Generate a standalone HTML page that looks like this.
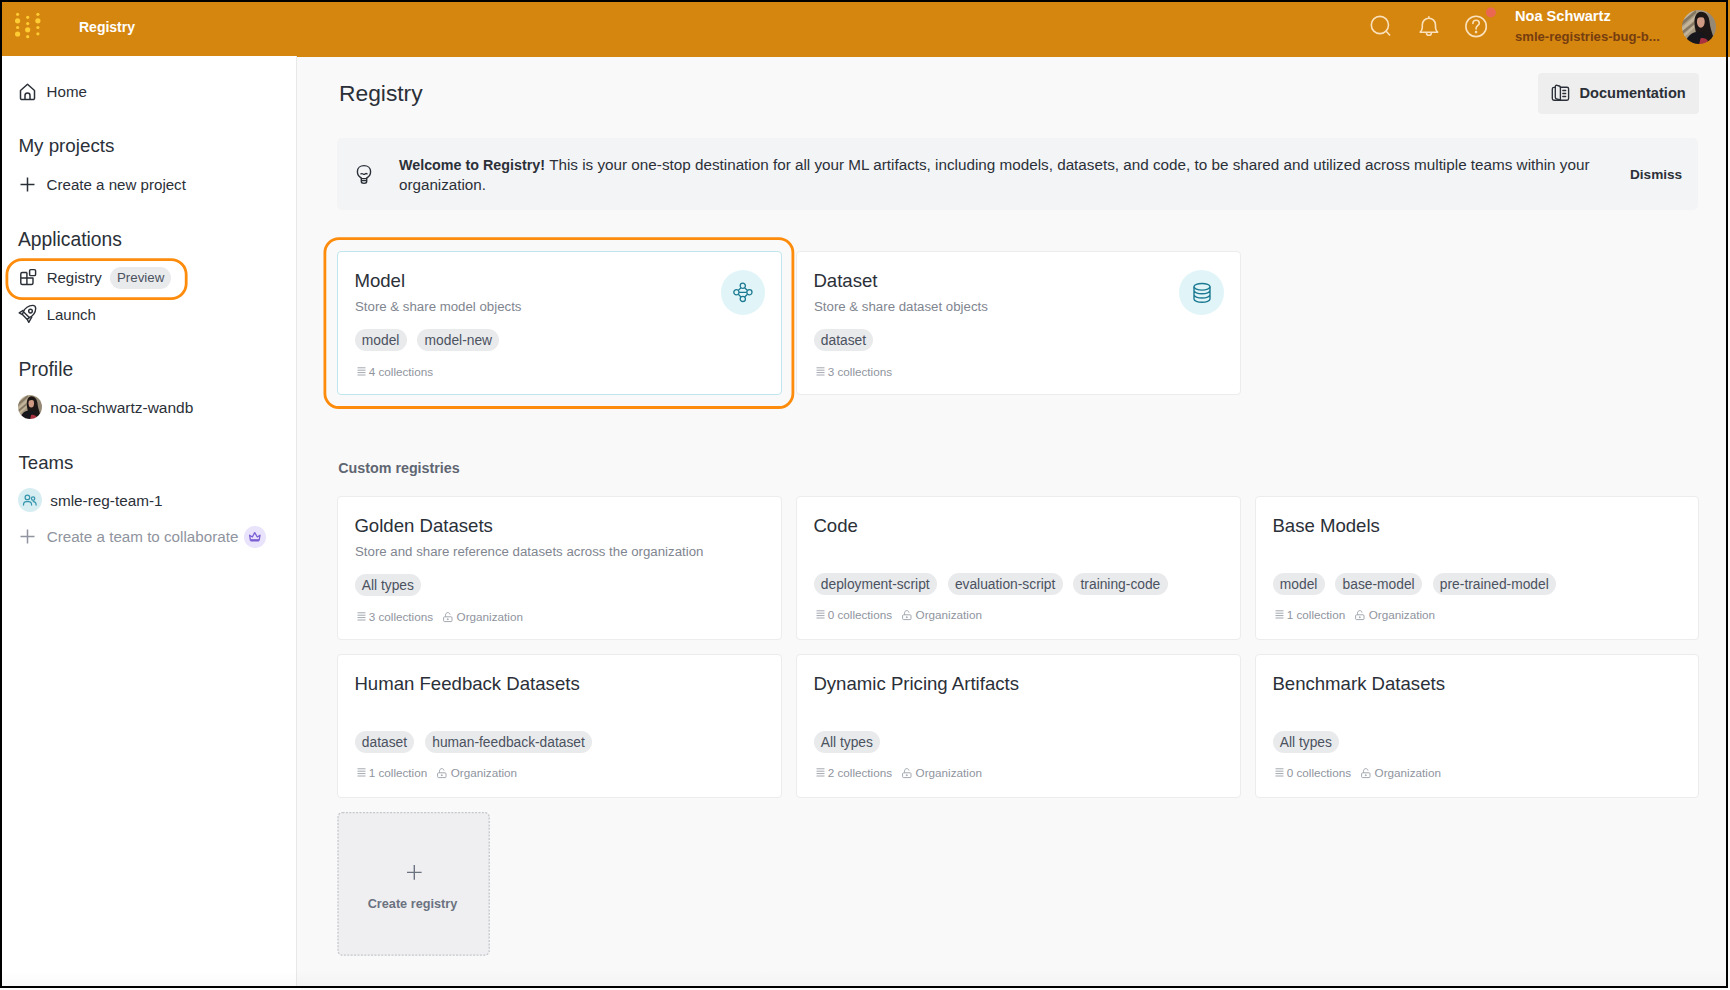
<!DOCTYPE html>
<html><head><meta charset="utf-8">
<style>
*{box-sizing:border-box;margin:0;padding:0}
html,body{width:1730px;height:990px;overflow:hidden;background:#fff}
body{position:relative;font-family:"Liberation Sans",sans-serif;color:#2b3038}
.frame{position:absolute;left:0;top:0;width:1728px;height:988px;background:#000}
.page{position:absolute;left:2px;top:2px;width:1724px;height:984px;background:#f9f9f9;overflow:hidden}
.t{position:absolute;white-space:nowrap;line-height:1}
svg{position:absolute;overflow:visible}
.hdr{position:absolute;left:0;top:0;width:1724px;height:54.6px;background:#d4860f}
.side{position:absolute;left:0;top:54px;width:295px;height:930px;background:#fff;border-right:1px solid #e8e8e8}
.card{position:absolute;background:#fff;border:1px solid #ececec;border-radius:4px}
.pill{position:absolute;height:22px;border-radius:11px;background:#e9eaec}
.ptxt{color:#4b5260;font-size:13.5px}
.ttl{font-size:18.6px;color:#2b3038}
.desc{font-size:13.25px;color:#80858f}
.pills{position:absolute;display:flex;gap:10.6px}
.pills span{display:block;height:22px;line-height:20px;padding:2px 7.3px 0;border-radius:11px;background:#e9eaec;color:#4b5260;font-size:13.8px;white-space:nowrap}
.metarow{position:absolute;display:flex;align-items:flex-start;height:10px;white-space:nowrap}
.metarow span{font-size:11.7px;line-height:1;color:#8f949e;margin-top:-1.4px}
.metarow .il{position:static;margin-top:-0.3px}
.metarow .m1{margin-left:3.2px}
.metarow .ik{position:static;margin-left:10px;margin-top:-0.5px}
.metarow .m2{margin-left:3.6px}
</style></head>
<body>
<div style="position:absolute;left:1728px;top:0;width:2px;height:56.6px;background:#d4860f"></div>
<div style="position:absolute;left:1728px;top:56.6px;width:2px;height:934px;background:#f9f9f9"></div>
<div style="position:absolute;left:0;top:988px;width:1730px;height:2px;background:#fdfdfd"></div>
<div class="frame"></div>
<div class="page">
<!-- coordinates inside .page are target coords minus 2 -->
<div style="position:absolute;left:-2px;top:-2px;width:1730px;height:990px">

<!-- HEADER -->
<div class="hdr" style="left:2px;top:2px"></div>
<svg style="left:0;top:0" width="60" height="56">
 <g fill="#ffcc33">
  <circle cx="17.6" cy="14.3" r="1.6"/><circle cx="17.6" cy="20.8" r="2.6"/><circle cx="17.6" cy="27.5" r="1.6"/><circle cx="17.6" cy="34" r="2.6"/>
  <circle cx="27.7" cy="17.3" r="1.6"/><circle cx="27.7" cy="23.6" r="1.6"/><circle cx="27.7" cy="29.8" r="2.6"/><circle cx="27.7" cy="36.7" r="1.6"/>
  <circle cx="37.9" cy="14.3" r="1.6"/><circle cx="37.9" cy="20.8" r="2.6"/><circle cx="37.9" cy="27.5" r="1.6"/><circle cx="37.9" cy="33.8" r="1.6"/>
 </g>
</svg>
<div class="t" style="left:79px;top:calc(31.9px - .8465*14px);font-size:14px;font-weight:700;color:#fff">Registry</div>

<!-- header icons -->
<svg style="left:1360px;top:0" width="140" height="56" fill="none" stroke="#fbe1bb" stroke-width="1.6" stroke-linecap="round">
 <circle cx="19.9" cy="25" r="8.6"/><path d="M26.2 31.3 L29.6 35"/>
 <path d="M60.2 32.2 C61.5 31 62.3 29.5 62.3 27.5 V25 C62.3 21 65.2 18.3 68.9 18.3 C72.6 18.3 75.5 21 75.5 25 V27.5 C75.5 29.5 76.3 31 77.6 32.2 Z M68.9 16.8 V18.3 M66.5 33.3 C66.8 35.8 71 35.8 71.3 33.3" stroke-linejoin="round"/>
 <circle cx="116.1" cy="26.4" r="10.2"/>
 <path d="M112.9 23.4 C112.9 21.4 114.3 20.2 116.1 20.2 C117.9 20.2 119.3 21.4 119.3 23.2 C119.3 25.3 116.1 25.6 116.1 28.3 V29"/>
 <circle cx="116.1" cy="32.1" r=".5" fill="#fbe1bb"/>
</svg>
<svg style="left:1480px;top:0" width="20" height="30"><circle cx="10.9" cy="12.5" r="5" fill="#ea6852"/></svg>
<div class="t" style="left:1515px;top:calc(21.5px - .8465*14.6px);font-size:14.6px;font-weight:700;color:#fff">Noa Schwartz</div>
<div class="t" style="left:1515px;top:calc(40.8px - .8465*13.1px);font-size:13.1px;font-weight:700;color:#763d10">smle-registries-bug-b...</div>
<svg style="left:1682px;top:9.8px" width="34" height="34" viewBox="0 0 34 34">
 <defs><clipPath id="av1"><circle cx="17" cy="17" r="17"/></clipPath><filter id="av1b" x="-10%" y="-10%" width="120%" height="120%"><feGaussianBlur stdDeviation=".55"/></filter></defs>
 <g clip-path="url(#av1)"><g filter="url(#av1b)">
  <rect x="-2" y="-2" width="38" height="38" fill="#a89a82"/>
  <path d="M-2 9 L11 -2 H15 L-2 14 Z M-2 19 L15 4 V8 L-2 23 Z M-2 28 L12 15 V18 L-2 31 Z" fill="#cbbda3" opacity=".75"/>
  <path d="M-2 13 L14 0 V3 L-2 17 Z M-2 23 L12 12 V14.5 L-2 26 Z" fill="#6f6352" opacity=".65"/>
  <path d="M25 2 L36 8 V30 L29 24 Z" fill="#8d8270" opacity=".7"/>
  <path d="M12.5 14 C12 7 14.5 1.8 19 1.8 C24 1.8 27 6 27.5 11.5 C28 17 29.5 21 31 26 L28 34 L15 32 C15 25 13 20 12.5 14 Z" fill="#1d1512"/>
  <ellipse cx="18.8" cy="11.8" rx="3.9" ry="6" fill="#cf9a84"/>
  <path d="M14.8 8.5 C15.5 5.2 17.5 4.3 19.8 4.6 C21.8 4.9 22.8 6.3 23 8.3 C21 6.8 18.2 6.6 14.8 8.5 Z" fill="#1d1512"/>
  <path d="M3 35 C4 27 9 22.5 15 22 C19 21.7 22 23.5 24 26.5 L25 35 Z" fill="#15141b"/>
  <path d="M17 35 L18.5 28.5 C21 27.5 23.5 28.5 25.5 30 L26 35 Z" fill="#a8323f"/>
 </g></g>
</svg>

<!-- SIDEBAR -->
<div class="side" style="left:2px;top:56px"></div>
<svg style="left:19px;top:83px" width="18" height="18" fill="none" stroke="#2b3038" stroke-width="1.5" stroke-linejoin="round">
 <path d="M1.5 7.5 L8.5 1.3 L15.5 7.5 V15.2 A1.4 1.4 0 0 1 14.1 16.6 H2.9 A1.4 1.4 0 0 1 1.5 15.2 Z"/>
 <path d="M6 16.6 V12.5 A2.5 2.5 0 0 1 11 12.5 V16.6"/>
</svg>
<div class="t" style="left:46.6px;top:calc(96.9px - .8465*15.1px);font-size:15.1px">Home</div>

<div class="t" style="left:18.4px;top:calc(153.4px - .8465*18.8px);font-size:18.8px">My projects</div>
<svg style="left:20px;top:177px" width="16" height="16" fill="none" stroke="#2b3038" stroke-width="1.5"><path d="M7.5 0.5 V14.5 M0.5 7.5 H14.5"/></svg>
<div class="t" style="left:46.6px;top:calc(189.8px - .8465*15.1px);font-size:15.1px">Create a new project</div>

<div class="t" style="left:17.9px;top:calc(246.4px - .8465*19.3px);font-size:19.3px">Applications</div>
<svg style="left:0;top:0" width="40" height="300" fill="none" stroke="#2b3038" stroke-width="1.45" stroke-linejoin="round">
 <path d="M26.9 272.5 H22.3 Q20.8 272.5 20.8 274 V283 Q20.8 284.5 22.3 284.5 H31.5 Q33 284.5 33 283 V278 H20.8 M26.9 272.5 V284.5"/>
 <rect x="29.6" y="269.6" width="6" height="6" rx="1.2"/>
</svg>
<div class="t" style="left:46.7px;top:calc(282.8px - .8465*15px);font-size:15px">Registry</div>
<div style="position:absolute;left:109.7px;top:267px;width:61.5px;height:22px;border-radius:11px;background:#e9eaec"></div>
<div class="t" style="left:117px;top:calc(282px - .8465*13.3px);font-size:13.3px;color:#4b5260">Preview</div>
<svg style="left:0;top:0" width="200" height="310" fill="none"><rect x="6.9" y="259.6" width="179.3" height="39" rx="15" stroke="#fd8c0d" stroke-width="2.8"/></svg>
<svg style="left:0;top:0" width="40" height="330" fill="none" stroke="#2b3038" stroke-width="1.4" stroke-linejoin="round">
 <path d="M23.4 311.7 C24.8 308.3 28.6 305.4 32.6 305.4 C34.8 305.4 35.7 306.4 35.7 308.5 C35.7 312.6 32.6 316.4 29.3 317.6 Z"/>
 <circle cx="30.5" cy="311.1" r="1.85"/>
 <path d="M23.6 310.1 L19.2 312.9 L22.4 314.6 M32 316.7 L28.8 322.3 L27.2 319.4 M22.4 314.6 L27.2 319.4 M23.4 311.7 L22.4 314.6 M29.3 317.6 L27.2 319.4"/>
</svg>
<div class="t" style="left:46.7px;top:calc(319.4px - .8465*15px);font-size:15px">Launch</div>

<div class="t" style="left:18.5px;top:calc(375.9px - .8465*19.3px);font-size:19.3px">Profile</div>
<svg style="left:17.7px;top:395.2px" width="24" height="24" viewBox="0 0 34 34">
 <defs><clipPath id="av2"><circle cx="17" cy="17" r="17"/></clipPath><filter id="av2b" x="-10%" y="-10%" width="120%" height="120%"><feGaussianBlur stdDeviation=".55"/></filter></defs>
 <g clip-path="url(#av2)"><g filter="url(#av2b)">
  <rect x="-2" y="-2" width="38" height="38" fill="#a89a82"/>
  <path d="M-2 9 L11 -2 H15 L-2 14 Z M-2 19 L15 4 V8 L-2 23 Z M-2 28 L12 15 V18 L-2 31 Z" fill="#cbbda3" opacity=".75"/>
  <path d="M-2 13 L14 0 V3 L-2 17 Z M-2 23 L12 12 V14.5 L-2 26 Z" fill="#6f6352" opacity=".65"/>
  <path d="M25 2 L36 8 V30 L29 24 Z" fill="#8d8270" opacity=".7"/>
  <path d="M12.5 14 C12 7 14.5 1.8 19 1.8 C24 1.8 27 6 27.5 11.5 C28 17 29.5 21 31 26 L28 34 L15 32 C15 25 13 20 12.5 14 Z" fill="#1d1512"/>
  <ellipse cx="18.8" cy="11.8" rx="3.9" ry="6" fill="#cf9a84"/>
  <path d="M14.8 8.5 C15.5 5.2 17.5 4.3 19.8 4.6 C21.8 4.9 22.8 6.3 23 8.3 C21 6.8 18.2 6.6 14.8 8.5 Z" fill="#1d1512"/>
  <path d="M3 35 C4 27 9 22.5 15 22 C19 21.7 22 23.5 24 26.5 L25 35 Z" fill="#15141b"/>
  <path d="M17 35 L18.5 28.5 C21 27.5 23.5 28.5 25.5 30 L26 35 Z" fill="#a8323f"/>
 </g></g>
</svg>
<div class="t" style="left:50.3px;top:calc(413px - .8465*15.5px);font-size:15.5px">noa-schwartz-wandb</div>

<div class="t" style="left:18.5px;top:calc(469.8px - .8465*18.6px);font-size:18.6px">Teams</div>
<div style="position:absolute;left:17.5px;top:488px;width:24px;height:24px;border-radius:50%;background:#d6edf2"></div>
<svg style="left:0;top:0" width="45" height="520" fill="none" stroke="#3596ae" stroke-width="1.25" stroke-linecap="round">
 <circle cx="27.4" cy="497.4" r="2.3"/><path d="M23.5 505 C23.5 502.8 24.6 501.6 26.3 501.6 H28.7 C30.5 501.6 31.6 502.8 31.6 505"/>
 <circle cx="33.1" cy="498.6" r="1.7"/><path d="M33.2 501.5 C35 501.5 36.1 502.8 36.1 505"/>
</svg>
<div class="t" style="left:50.3px;top:calc(506px - .8465*15.3px);font-size:15.3px">smle-reg-team-1</div>
<svg style="left:20px;top:529px" width="16" height="16" fill="none" stroke="#8f949e" stroke-width="1.5"><path d="M7.5 0.5 V14.5 M0.5 7.5 H14.5"/></svg>
<div class="t" style="left:46.7px;top:calc(542px - .8465*15.2px);font-size:15.2px;color:#8f949e">Create a team to collaborate</div>
<div style="position:absolute;left:244.2px;top:526.2px;width:21.6px;height:21.6px;border-radius:50%;background:#e9e3fc"></div>
<svg style="left:0;top:0" width="270" height="550" fill="none" stroke="#7a5fd3" stroke-width="1.3" stroke-linejoin="round">
 <path d="M249.6 535.2 L252.3 537 L254.7 532.6 L257.3 537 L260 535.2 L259.2 540.2 H250.4 Z"/>
 <path d="M250.6 540.4 H258.9" stroke-width="2.2"/>
</svg>

<!-- MAIN -->
<div class="t" style="left:339px;top:calc(101.3px - .8465*22.8px);font-size:22.8px">Registry</div>

<div style="position:absolute;left:1538px;top:73px;width:160.5px;height:40.5px;border-radius:4px;background:#eeeeee"></div>
<svg style="left:0;top:0" width="1580" height="110" fill="none" stroke="#2b3038" stroke-width="1.35" stroke-linejoin="round" stroke-linecap="round">
 <path d="M1560.4 87.2 H1567 Q1568.6 87.2 1568.6 88.8 V98.6 Q1568.6 100.2 1567 100.2 H1554 Q1552.3 100.2 1552.3 98.5 V89 Q1552.3 87.4 1554 87.4 H1555.3"/>
 <path d="M1555.3 97.3 V86.6 Q1555.3 84.9 1557 85.3 L1559.3 86 Q1560.4 86.4 1560.4 87.6 V100 M1555.3 97.3 Q1555.3 98.5 1556.5 98.8 L1560.4 100"/>
 <path d="M1562.9 90.5 H1565.6 M1562.9 93.5 H1565.6 M1562.9 96.5 H1565.6" stroke-width="1.5"/>
</svg>
<div class="t" style="left:1579.5px;top:calc(98.7px - .8465*14.6px);font-size:14.6px;font-weight:700">Documentation</div>

<div style="position:absolute;left:337.4px;top:137.6px;width:1360.6px;height:72.9px;border-radius:5px;background:#f3f4f6"></div>
<svg style="left:0;top:0" width="380" height="190" fill="none" stroke="#2b3038" stroke-width="1.4" stroke-linejoin="round" stroke-linecap="round">
 <path d="M361.3 178 C358.8 176.8 357.4 174.4 357.4 171.6 C357.4 167.9 360.3 165.6 364 165.6 C367.7 165.6 370.6 167.9 370.6 171.6 C370.6 174.4 369.2 176.8 366.7 178 V181.6 C366.7 182.8 365.5 183.4 364 183.4 C362.5 183.4 361.3 182.8 361.3 181.6 Z"/>
 <path d="M361.3 178.6 H366.7 M361.8 180.6 H366.2" stroke-width="1.1"/>
 <path d="M360.9 173.9 C361.8 173.3 362.6 173.6 363.2 174.1 C363.8 174.5 364.5 174.5 365 174 C365.6 173.5 366.4 173.4 367.1 173.9" stroke-width="1.3"/>
</svg>
<div class="t" style="left:399px;top:calc(169.5px - .8465*15.2px);font-size:15.2px;color:#2b3038"><b style="font-size:14.3px">Welcome to Registry!</b> <span style="font-size:15.25px">This is your one-stop destination for all your ML artifacts, including models, datasets, and code, to be shared and utilized across multiple teams within your</span></div>
<div class="t" style="left:399px;top:calc(189.8px - .8465*15.2px);font-size:15.2px;color:#2b3038">organization.</div>
<div class="t" style="left:1630px;top:calc(179.6px - .8465*13.6px);font-size:13.6px;font-weight:700">Dismiss</div>

<!-- Model -->
<div class="card" style="left:337px;top:251px;width:445px;height:144px;border-color:#bfe6ee"></div>
<div class="t ttl" style="left:354.4px;top:calc(288px - .8465*18.6px)">Model</div>
<div class="t desc" style="left:355px;top:calc(311.5px - .8465*13.25px)">Store &amp; share model objects</div>
<div class="pills" style="left:354.5px;top:329px"><span>model</span><span>model-new</span></div>
<div class="metarow" style="left:356.5px;top:367.0px"><svg class="il" width="9" height="9" fill="none" stroke="#a3a8b0" stroke-width="1"><path d="M0.5 0.8 H8.5 M0.5 3.2 H8.5 M0.5 5.6 H8.5 M0.5 8 H8.5"/></svg><span class="m1">4 collections</span></div>
<!-- Dataset -->
<div class="card" style="left:796px;top:251px;width:445px;height:144px"></div>
<div class="t ttl" style="left:813.4px;top:calc(288px - .8465*18.6px)">Dataset</div>
<div class="t desc" style="left:814px;top:calc(311.5px - .8465*13.25px)">Store &amp; share dataset objects</div>
<div class="pills" style="left:813.5px;top:329px"><span>dataset</span></div>
<div class="metarow" style="left:815.5px;top:367.0px"><svg class="il" width="9" height="9" fill="none" stroke="#a3a8b0" stroke-width="1"><path d="M0.5 0.8 H8.5 M0.5 3.2 H8.5 M0.5 5.6 H8.5 M0.5 8 H8.5"/></svg><span class="m1">3 collections</span></div>
<!-- Golden Datasets -->
<div class="card" style="left:337px;top:496px;width:445px;height:144px"></div>
<div class="t ttl" style="left:354.4px;top:calc(533px - .8465*18.6px)">Golden Datasets</div>
<div class="t desc" style="left:355px;top:calc(556.5px - .8465*13.25px)">Store and share reference datasets across the organization</div>
<div class="pills" style="left:354.5px;top:574px"><span>All types</span></div>
<div class="metarow" style="left:356.5px;top:612.0px"><svg class="il" width="9" height="9" fill="none" stroke="#a3a8b0" stroke-width="1"><path d="M0.5 0.8 H8.5 M0.5 3.2 H8.5 M0.5 5.6 H8.5 M0.5 8 H8.5"/></svg><span class="m1">3 collections</span><svg class="ik" width="10" height="10" fill="none" stroke="#a3a8b0" stroke-width="1"><path d="M2.5 4.8 V3.2 C2.5 1.7 3.5 0.6 4.8 0.6 C6 0.6 6.9 1.5 7 2.6"/><rect x="0.6" y="4.8" width="8.4" height="4.8" rx="1"/><circle cx="4.8" cy="7.2" r=".5" fill="#a3a8b0"/></svg><span class="m2">Organization</span></div>
<!-- Code -->
<div class="card" style="left:796px;top:496px;width:445px;height:144px"></div>
<div class="t ttl" style="left:813.4px;top:calc(533px - .8465*18.6px)">Code</div>
<div class="pills" style="left:813.5px;top:573px"><span>deployment-script</span><span>evaluation-script</span><span>training-code</span></div>
<div class="metarow" style="left:815.5px;top:610.4px"><svg class="il" width="9" height="9" fill="none" stroke="#a3a8b0" stroke-width="1"><path d="M0.5 0.8 H8.5 M0.5 3.2 H8.5 M0.5 5.6 H8.5 M0.5 8 H8.5"/></svg><span class="m1">0 collections</span><svg class="ik" width="10" height="10" fill="none" stroke="#a3a8b0" stroke-width="1"><path d="M2.5 4.8 V3.2 C2.5 1.7 3.5 0.6 4.8 0.6 C6 0.6 6.9 1.5 7 2.6"/><rect x="0.6" y="4.8" width="8.4" height="4.8" rx="1"/><circle cx="4.8" cy="7.2" r=".5" fill="#a3a8b0"/></svg><span class="m2">Organization</span></div>
<!-- Base Models -->
<div class="card" style="left:1255px;top:496px;width:444px;height:144px"></div>
<div class="t ttl" style="left:1272.4px;top:calc(533px - .8465*18.6px)">Base Models</div>
<div class="pills" style="left:1272.5px;top:573px"><span>model</span><span>base-model</span><span>pre-trained-model</span></div>
<div class="metarow" style="left:1274.5px;top:610.4px"><svg class="il" width="9" height="9" fill="none" stroke="#a3a8b0" stroke-width="1"><path d="M0.5 0.8 H8.5 M0.5 3.2 H8.5 M0.5 5.6 H8.5 M0.5 8 H8.5"/></svg><span class="m1">1 collection</span><svg class="ik" width="10" height="10" fill="none" stroke="#a3a8b0" stroke-width="1"><path d="M2.5 4.8 V3.2 C2.5 1.7 3.5 0.6 4.8 0.6 C6 0.6 6.9 1.5 7 2.6"/><rect x="0.6" y="4.8" width="8.4" height="4.8" rx="1"/><circle cx="4.8" cy="7.2" r=".5" fill="#a3a8b0"/></svg><span class="m2">Organization</span></div>
<!-- Human Feedback Datasets -->
<div class="card" style="left:337px;top:654px;width:445px;height:144px"></div>
<div class="t ttl" style="left:354.4px;top:calc(691px - .8465*18.6px)">Human Feedback Datasets</div>
<div class="pills" style="left:354.5px;top:731px"><span>dataset</span><span>human-feedback-dataset</span></div>
<div class="metarow" style="left:356.5px;top:768.4px"><svg class="il" width="9" height="9" fill="none" stroke="#a3a8b0" stroke-width="1"><path d="M0.5 0.8 H8.5 M0.5 3.2 H8.5 M0.5 5.6 H8.5 M0.5 8 H8.5"/></svg><span class="m1">1 collection</span><svg class="ik" width="10" height="10" fill="none" stroke="#a3a8b0" stroke-width="1"><path d="M2.5 4.8 V3.2 C2.5 1.7 3.5 0.6 4.8 0.6 C6 0.6 6.9 1.5 7 2.6"/><rect x="0.6" y="4.8" width="8.4" height="4.8" rx="1"/><circle cx="4.8" cy="7.2" r=".5" fill="#a3a8b0"/></svg><span class="m2">Organization</span></div>
<!-- Dynamic Pricing Artifacts -->
<div class="card" style="left:796px;top:654px;width:445px;height:144px"></div>
<div class="t ttl" style="left:813.4px;top:calc(691px - .8465*18.6px)">Dynamic Pricing Artifacts</div>
<div class="pills" style="left:813.5px;top:731px"><span>All types</span></div>
<div class="metarow" style="left:815.5px;top:768.4px"><svg class="il" width="9" height="9" fill="none" stroke="#a3a8b0" stroke-width="1"><path d="M0.5 0.8 H8.5 M0.5 3.2 H8.5 M0.5 5.6 H8.5 M0.5 8 H8.5"/></svg><span class="m1">2 collections</span><svg class="ik" width="10" height="10" fill="none" stroke="#a3a8b0" stroke-width="1"><path d="M2.5 4.8 V3.2 C2.5 1.7 3.5 0.6 4.8 0.6 C6 0.6 6.9 1.5 7 2.6"/><rect x="0.6" y="4.8" width="8.4" height="4.8" rx="1"/><circle cx="4.8" cy="7.2" r=".5" fill="#a3a8b0"/></svg><span class="m2">Organization</span></div>
<!-- Benchmark Datasets -->
<div class="card" style="left:1255px;top:654px;width:444px;height:144px"></div>
<div class="t ttl" style="left:1272.4px;top:calc(691px - .8465*18.6px)">Benchmark Datasets</div>
<div class="pills" style="left:1272.5px;top:731px"><span>All types</span></div>
<div class="metarow" style="left:1274.5px;top:768.4px"><svg class="il" width="9" height="9" fill="none" stroke="#a3a8b0" stroke-width="1"><path d="M0.5 0.8 H8.5 M0.5 3.2 H8.5 M0.5 5.6 H8.5 M0.5 8 H8.5"/></svg><span class="m1">0 collections</span><svg class="ik" width="10" height="10" fill="none" stroke="#a3a8b0" stroke-width="1"><path d="M2.5 4.8 V3.2 C2.5 1.7 3.5 0.6 4.8 0.6 C6 0.6 6.9 1.5 7 2.6"/><rect x="0.6" y="4.8" width="8.4" height="4.8" rx="1"/><circle cx="4.8" cy="7.2" r=".5" fill="#a3a8b0"/></svg><span class="m2">Organization</span></div>
<div style="position:absolute;left:720.5px;top:270px;width:44.5px;height:44.5px;border-radius:50%;background:#e1f5f9"></div>
<svg style="left:742.9px;top:291.9px" width="1" height="1" fill="none" stroke="#1b7a92" stroke-width="1.3">
 <circle cx="-0.2" cy="-6.2" r="2.6"/><circle cx="-6.6" cy="0.3" r="2.6"/><circle cx="6.4" cy="0.3" r="2.6"/><circle cx="-0.2" cy="6.9" r="2.6"/>
 <path d="M-2 -4.3 L-4.7 -1.6 M1.6 -4.3 L4.5 -1.6 M-4.7 2.2 L-2 5 M4.5 2.2 L1.6 5 M-4 0.3 H3.8"/>
</svg>
<svg style="left:0;top:0" width="800" height="420" fill="none"><rect x="324.9" y="238.7" width="468" height="168.8" rx="14" stroke="#fd8c0d" stroke-width="2.8"/></svg>
<div style="position:absolute;left:1179px;top:270px;width:44.5px;height:44.5px;border-radius:50%;background:#e1f5f9"></div>
<svg style="left:1201.6px;top:291.9px" width="1" height="1" fill="none" stroke="#1b7a92" stroke-width="1.4">
 <ellipse cx="0" cy="-5.2" rx="8" ry="3.3"/>
 <path d="M-8 -5.2 V7 A8 3.3 0 0 0 8 7 V-5.2 M-8 -1.5 A8 3.3 0 0 0 8 -1.5 M-8 2.7 A8 3.3 0 0 0 8 2.7"/>
</svg>

<div class="t" style="left:338.2px;top:calc(473.2px - .8465*14.3px);font-size:14.3px;font-weight:700;color:#5f6672">Custom registries</div>

<div style="position:absolute;left:297px;top:970px;width:1429px;height:16px;background:linear-gradient(rgba(0,0,0,0),rgba(0,0,0,.025))"></div>
<div style="position:absolute;left:2px;top:970px;width:295px;height:16px;background:linear-gradient(rgba(0,0,0,0),rgba(0,0,0,.02))"></div>
<!-- Create registry -->
<svg style="left:0;top:0" width="500" height="960"><rect x="338" y="812.6" width="151.2" height="142.6" rx="4.5" fill="#efeff1" stroke="#c4c7cc" stroke-width="1.3" stroke-dasharray="2 1.4"/></svg>
<svg style="left:406.5px;top:865px" width="15" height="15" fill="none" stroke="#6b7280" stroke-width="1.4"><path d="M7.3 0 V14.8 M0 7.4 H14.6"/></svg>
<div class="t" style="left:367.7px;top:calc(908.4px - .8465*12.7px);font-size:12.7px;font-weight:700;color:#6b7280">Create registry</div>

</div>
</div>
</body></html>
